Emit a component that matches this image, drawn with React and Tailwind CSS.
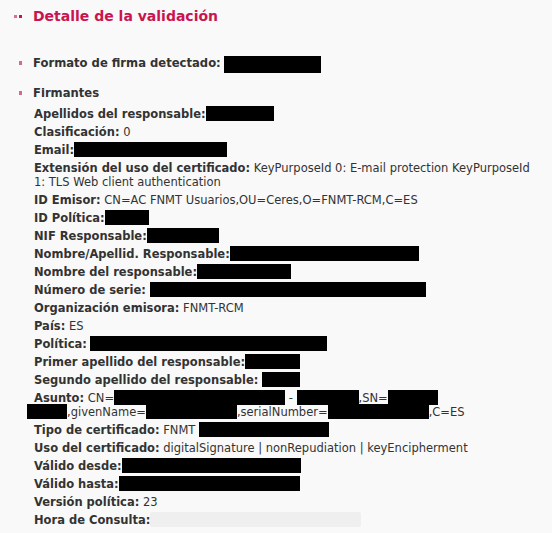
import React from 'react';

const Box = ({ w, light, className = '' }) => (
  <span
    className={`inline-block h-[15px] -my-[2px] align-[-1px] ${light ? 'bg-[#efefef] rounded-[2px]' : 'bg-black'} ${className}`}
    style={{ width: w }}
  />
);

const Row = ({ label, children }) => (
  <div className="leading-[14px] mb-[4px]">
    <b className="font-bold">{label}</b>
    {children}
  </div>
);

const Bullet = () => <span className="inline-block w-[3px] h-[4px] bg-[#d46b8c] mr-[11px] mb-[2px]" />;

const App = () => {
  return (
    <div className="min-h-screen w-[552px] bg-[#f9f9f9] text-[#333] text-[11.5px] font-['DejaVu_Sans',Verdana,sans-serif] pt-[6px] pr-[10px]">
      <h2 className="flex items-center pl-[14px] h-[20px]">
        <span className="w-[3px] h-[3px] bg-[#e06a94] mr-[2px]" />
        <span className="w-[3px] h-[3px] bg-[#c8144f] mr-[11px]" />
        <span className="text-[#c8144f] font-bold text-[14px]">Detalle de la validación</span>
      </h2>

      <ul className="pl-[19px] mt-[29px]">
        <li className="flex items-center text-[11.6px] font-bold h-[18px]">
          <Bullet />
          <span>Formato de firma detectado:</span>
          <span className="inline-block w-[97px] h-[17px] bg-black ml-[3px]" />
        </li>
        <li className="mt-[13px]">
          <div className="flex items-center text-[11.6px] font-bold h-[16px]">
            <Bullet />
            <span>Firmantes</span>
          </div>
          <div className="pl-[15px] pt-[5px]">
            <Row label="Apellidos del responsable:"><Box w={68} /></Row>
            <Row label="Clasificación:"> 0</Row>
            <Row label="Email:"><Box w={153} /></Row>
            <Row label="Extensión del uso del certificado:"> KeyPurposeId 0: E-mail protection KeyPurposeId 1: TLS Web client authentication</Row>
            <Row label="ID Emisor:"> CN=AC FNMT Usuarios,OU=Ceres,O=FNMT-RCM,C=ES</Row>
            <Row label="ID Política:"><Box w={44} /></Row>
            <Row label="NIF Responsable:"><Box w={72} /></Row>
            <Row label="Nombre/Apellid. Responsable:"><Box w={189} /></Row>
            <Row label="Nombre del responsable:"><Box w={94} /></Row>
            <Row label="Número de serie:"> <Box w={276} /></Row>
            <Row label="Organización emisora:"> FNMT-RCM</Row>
            <Row label="País:"> ES</Row>
            <Row label="Política:"> <Box w={237} /></Row>
            <Row label="Primer apellido del responsable:"><Box w={55} /></Row>
            <Row label="Segundo apellido del responsable:"> <Box w={38} /></Row>
            <Row label="Asunto:">
              {' '}CN=<Box w={171} /> - <Box w={62} />,SN=<Box w={50} />
              <br />
              <Box w={40} className="-ml-[7px]" />,givenName=<Box w={91} />,serialNumber=<Box w={101} />,C=ES
            </Row>
            <Row label="Tipo de certificado:"> FNMT <Box w={130} /></Row>
            <Row label="Uso del certificado:"> digitalSignature | nonRepudiation | keyEncipherment</Row>
            <Row label="Válido desde:"><Box w={179} /></Row>
            <Row label="Válido hasta:"><Box w={181} /></Row>
            <Row label="Versión política:"> 23</Row>
            <Row label="Hora de Consulta:"><Box w={211} light /></Row>
          </div>
        </li>
      </ul>
    </div>
  );
};

export default App;
